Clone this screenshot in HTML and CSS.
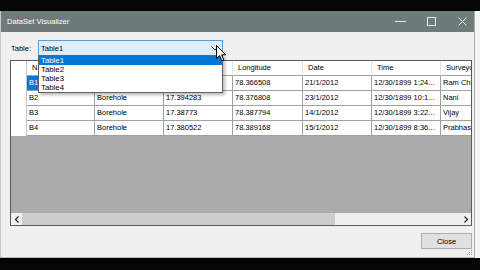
FILE: index.html
```html
<!DOCTYPE html>
<html>
<head>
<meta charset="utf-8">
<link rel="stylesheet" href="styles.css">
</head>
<body>
<div class="screen">
  <div class="band-top"></div>
  <div class="middle">
    <div class="window">
      <div class="titlebar">
        <span class="title">DataSet Visualizer</span>
        <div class="controls">
          <svg class="ctl" width="30" height="21" viewBox="0 0 30 21"><line x1="11" y1="10.5" x2="22" y2="10.5" stroke="#e4e8e8" stroke-width="1"/></svg>
          <svg class="ctl" width="30" height="21" viewBox="0 0 30 21"><rect x="13.5" y="6.5" width="8" height="8" fill="none" stroke="#e4e8e8" stroke-width="1"/></svg>
          <svg class="ctl" width="30" height="21" viewBox="0 0 30 21"><path d="M14.5 6.5 L22.5 14.5 M22.5 6.5 L14.5 14.5" stroke="#e4e8e8" stroke-width="1"/></svg>
        </div>
      </div>
      <div class="body">
        <div class="toolbar">
          <span class="label">Table:</span>
          <div class="combo">
            <span class="combo-text">Table1</span>
            <svg class="chev" width="8" height="5" viewBox="0 0 8 5"><path d="M0.5 0.5 L4 4 L7.5 0.5" fill="none" stroke="#333" stroke-width="1"/></svg>
            <div class="dropdown">
              <div class="opt sel">Table1</div>
              <div class="opt">Table2</div>
              <div class="opt">Table3</div>
              <div class="opt">Table4</div>
            </div>
            <svg class="cursor" width="11" height="17" viewBox="0 0 11 17"><path d="M0.5 0.5 L0.5 13.5 L3.5 10.5 L5.8 15.8 L7.8 15 L5.6 9.8 L9.8 9.8 Z" fill="#fff" stroke="#000" stroke-width="1" stroke-linejoin="round"/></svg>
          </div>
        </div>
        <div class="grid">
          <div class="rows">
            <div class="row head">
              <div class="rh"></div>
              <div class="c">Name</div>
              <div class="c">Type</div>
              <div class="c">Latitude</div>
              <div class="c">Longitude</div>
              <div class="c">Date</div>
              <div class="c">Time</div>
              <div class="c last">Surveyor</div>
            </div>
            <div class="row">
              <div class="rh"></div>
              <div class="c selcell">B1</div>
              <div class="c">Borehole</div>
              <div class="c">17.385044</div>
              <div class="c">78.366508</div>
              <div class="c">21/1/2012</div>
              <div class="c">12/30/1899 1:24...</div>
              <div class="c last">Ram Charan</div>
            </div>
            <div class="row">
              <div class="rh"></div>
              <div class="c">B2</div>
              <div class="c">Borehole</div>
              <div class="c">17.394283</div>
              <div class="c">78.376808</div>
              <div class="c">23/1/2012</div>
              <div class="c">12/30/1899 10:1...</div>
              <div class="c last">Nani</div>
            </div>
            <div class="row">
              <div class="rh"></div>
              <div class="c">B3</div>
              <div class="c">Borehole</div>
              <div class="c">17.38773</div>
              <div class="c">78.387794</div>
              <div class="c">14/1/2012</div>
              <div class="c">12/30/1899 3:22...</div>
              <div class="c last">Vijay</div>
            </div>
            <div class="row">
              <div class="rh"></div>
              <div class="c">B4</div>
              <div class="c">Borehole</div>
              <div class="c">17.380522</div>
              <div class="c">78.389168</div>
              <div class="c">15/1/2012</div>
              <div class="c">12/30/1899 8:36...</div>
              <div class="c last">Prabhas</div>
            </div>
          </div>
          <div class="empty"></div>
          <div class="hscroll">
            <div class="sarrow"><svg width="6" height="7" viewBox="0 0 6 7"><path d="M4.5 0.5 L1.5 3.5 L4.5 6.5" fill="none" stroke="#222" stroke-width="1.2"/></svg></div>
            <div class="thumb"></div>
            <div class="track"></div>
            <div class="sarrow"><svg width="6" height="7" viewBox="0 0 6 7"><path d="M1.5 0.5 L4.5 3.5 L1.5 6.5" fill="none" stroke="#222" stroke-width="1.2"/></svg></div>
          </div>
        </div>
        <div class="footer">
          <button class="close">Close</button>
        </div>
        <svg class="grip" width="6" height="6" viewBox="0 0 6 6"><rect x="4" y="0" width="1" height="1" fill="#999"/><rect x="2" y="2" width="1" height="1" fill="#999"/><rect x="4" y="2" width="1" height="1" fill="#999"/><rect x="0" y="4" width="1" height="1" fill="#999"/><rect x="2" y="4" width="1" height="1" fill="#999"/><rect x="4" y="4" width="1" height="1" fill="#999"/></svg>
      </div>
    </div>
    <div class="outside"></div>
  </div>
  <div class="band-bottom"></div>
</div>
</body>
</html>
```

FILE: styles.css
```css
* { box-sizing: border-box; }
html, body { margin: 0; padding: 0; }
body {
  width: 480px;
  height: 270px;
  overflow: hidden;
  background: #000;
  font-family: "Liberation Sans", Arial, sans-serif;
  font-size: 7.5px;
  color: #000;
}
.screen { display: flex; flex-direction: column; width: 480px; height: 270px; }
.band-top { height: 11px; background: #050505; flex: none; }
.band-bottom { height: 12px; background: #050505; flex: none; }
.middle { display: flex; height: 247px; flex: none; }
.outside { flex: 1; background: #f4f4f4; }
.window {
  width: 475px;
  height: 247px;
  display: flex;
  flex-direction: column;
  background: #f0f0f0;
  border-left: 1px solid #c9c9c9;
  border-right: 1px solid #a9a9a9;
  border-bottom: 1px solid #b5b5b5;
}
.titlebar {
  height: 21px;
  flex: none;
  background: #6f7a7a;
  display: flex;
  align-items: center;
  justify-content: space-between;
  padding-left: 6px;
}
.title { color: #fff; font-size: 7.6px; }
.controls { display: flex; align-items: center; }
.ctl { display: block; }
.body {
  flex: 1;
  position: relative;
  display: flex;
  flex-direction: column;
  padding: 8px 2px 0 9px;
}
.toolbar { display: flex; align-items: center; height: 16px; }
.label { width: 28px; padding-left: 1px; }
.combo {
  position: relative;
  width: 185px;
  height: 16px;
  border: 1px solid #5b9ddc;
  background: #deedfa;
  display: flex;
  align-items: center;
  padding-left: 2px;
}
.combo-text { flex: 1; }
.chev { margin-right: 3px; }
.dropdown {
  position: absolute;
  left: -1px;
  top: 14px;
  width: 185px;
  height: 38px;
  border: 1px solid #646464;
  background: #fff;
  box-shadow: 2px 2px 3px rgba(0,0,0,0.28);
  z-index: 5;
}
.opt { height: 9px; line-height: 9px; padding-left: 2px; font-size: 7.8px; }
.opt.sel { background: #0078d7; color: #fff; }
.cursor { position: absolute; left: 177px; top: 4px; z-index: 6; }
.grid {
  margin-top: 4px;
  width: 462px;
  height: 166px;
  border: 1px solid #5a5a5a;
  display: flex;
  flex-direction: column;
  overflow: hidden;
  background: #ababab;
}
.rows { background: #fff; flex: none; }
.row { display: grid; grid-template-columns: 16px 68px 69px 69px 70px 69px 69px 69px; height: 15px; }
.rh { border-right: 1px solid #c8c8c8; background: #fff; }
.c {
  border-right: 1px solid #a0a0a0;
  border-bottom: 1px solid #a0a0a0;
  padding-left: 2px;
  line-height: 14px;
  white-space: nowrap;
  overflow: hidden;
}
.head .c { border-right: 1px solid #e3e3e3; padding-left: 5px; }
.selcell { background: #0078d7; color: #fff; }
.empty { flex: 1; background: #ababab; }
.hscroll { height: 12px; flex: none; display: flex; background: #f0f0f0; }
.sarrow { width: 11px; display: flex; align-items: center; justify-content: center; background: #f0f0f0; }
.thumb { width: 313px; background: #cdcdcd; }
.track { flex: 1; background: #f0f0f0; }
.footer { display: flex; justify-content: flex-end; margin-top: 7px; width: 462px; }
.close {
  width: 51px;
  height: 16px;
  border: 1px solid #adadad;
  background: #e1e1e1;
  font-family: "Liberation Sans", Arial, sans-serif;
  font-size: 7.5px;
  color: #000;
  padding: 0;
}
.grip { position: absolute; right: 1px; bottom: 1px; }
```
